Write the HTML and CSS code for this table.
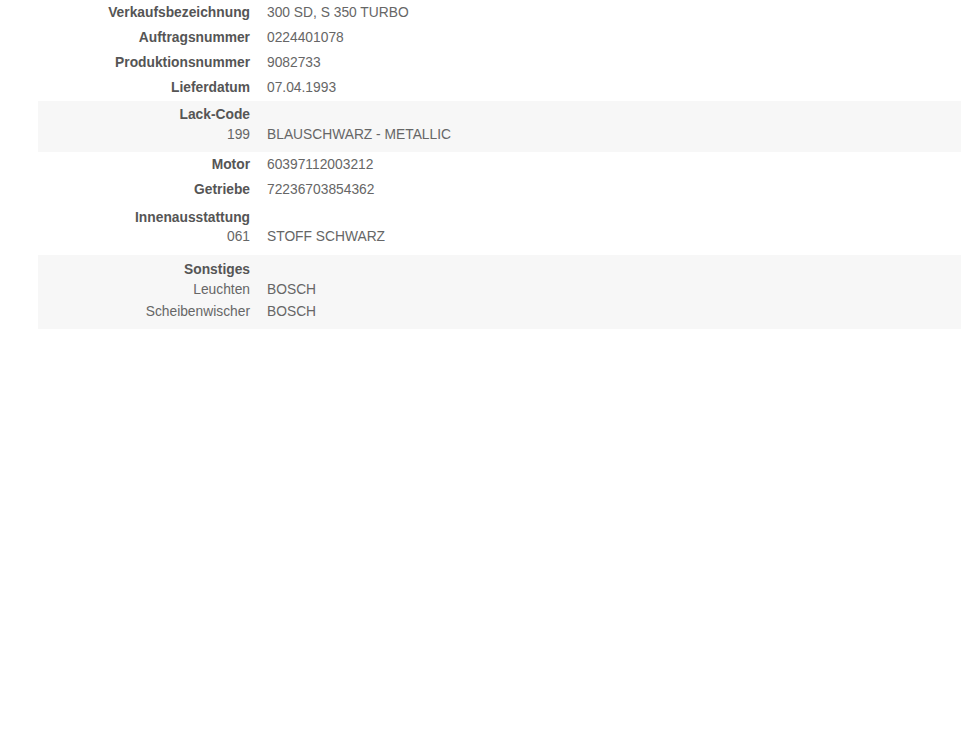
FILE: index.html
```html
<!DOCTYPE html>
<html lang="de">
<head>
<meta charset="utf-8">
<title>Fahrzeugdaten</title>
<link rel="stylesheet" href="styles.css">
</head>
<body>
<div class="sheet">
  <div class="row"><div class="lbl">Verkaufsbezeichnung</div><div class="val">300 SD, S 350 TURBO</div></div>
  <div class="row"><div class="lbl">Auftragsnummer</div><div class="val">0224401078</div></div>
  <div class="row"><div class="lbl">Produktionsnummer</div><div class="val">9082733</div></div>
  <div class="row"><div class="lbl">Lieferdatum</div><div class="val">07.04.1993</div></div>

  <div class="group shaded g-lack">
    <div class="sub"><div class="lbl">Lack-Code</div><div class="val"></div></div>
    <div class="sub"><div class="code">199</div><div class="val">BLAUSCHWARZ - METALLIC</div></div>
  </div>

  <div class="row"><div class="lbl">Motor</div><div class="val">60397112003212</div></div>
  <div class="row"><div class="lbl">Getriebe</div><div class="val">72236703854362</div></div>

  <div class="group g-innen">
    <div class="sub head"><div class="lbl">Innenausstattung</div><div class="val"></div></div>
    <div class="sub"><div class="code">061</div><div class="val">STOFF SCHWARZ</div></div>
  </div>

  <div class="group shaded g-sonst">
    <div class="sub"><div class="lbl">Sonstiges</div><div class="val"></div></div>
    <div class="sub"><div class="code">Leuchten</div><div class="val">BOSCH</div></div>
    <div class="sub tall"><div class="code">Scheibenwischer</div><div class="val">BOSCH</div></div>
  </div>
</div>
</body>
</html>
```

FILE: styles.css
```css
html, body {
  margin: 0;
  padding: 0;
  background: #ffffff;
}
body {
  font-family: "Liberation Sans", Arial, sans-serif;
  font-size: 13.8px;
  color: #666666;
}
.sheet {
  margin-left: 38px;
}
.row, .sub {
  display: grid;
  grid-template-columns: 212px 1fr;
  column-gap: 17px;
}
.row {
  height: 25px;
  line-height: 25px;
}
.sub {
  height: 20px;
  line-height: 20px;
}
.g-innen .sub.head {
  height: 19px;
}
.sub.tall {
  height: 22px;
  line-height: 22px;
  margin-top: 1px;
}
.lbl {
  text-align: right;
  font-weight: bold;
  color: #555555;
  white-space: nowrap;
}
.code {
  text-align: right;
  color: #666666;
  white-space: nowrap;
}
.val {
  color: #666666;
  white-space: nowrap;
}
.shaded {
  background: #f7f7f7;
}
.g-lack {
  margin-top: 1px;
  padding: 4px 0 7px;
}
.g-innen {
  padding: 6px 0 8px;
}
.g-sonst {
  padding: 5px 0 6px;
}
```
